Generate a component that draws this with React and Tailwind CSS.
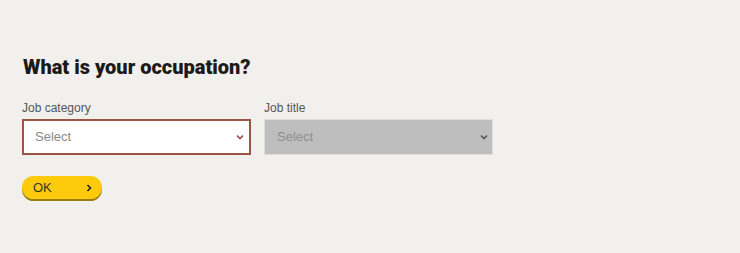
import React from 'react';

const Chevron = ({ className }) => (
  <svg className={className} width="8" height="6" viewBox="0 0 8 6" fill="none">
    <path d="M1 1.5 L4 4.5 L7 1.5" stroke="currentColor" strokeWidth="1.6" />
  </svg>
);

const App = () => {
  return (
    <div className="w-[740px] h-[253px] bg-[#f1f0ec] font-['Liberation_Sans',sans-serif] pt-[56px] pl-[23px]">
      <h1 className="font-['Roboto',sans-serif] font-black text-[20px] leading-[22px] text-[#1c1a18]">
        What is your occupation?
      </h1>

      <div className="flex gap-[13px] mt-[23px] -ml-px">
        <div className="w-[229px]">
          <div className="text-[12px] leading-[14px] text-[#555] mb-[4px]">Job category</div>
          <div className="h-[36px] bg-white border-2 border-[#9c5445] flex items-center justify-between pl-[11px] pr-[5px]">
            <span className="text-[13px] text-[#8a8a8a]">Select</span>
            <Chevron className="text-[#a04848]" />
          </div>
        </div>
        <div className="w-[229px]">
          <div className="text-[12px] leading-[14px] text-[#555] mb-[4px]">Job title</div>
          <div className="h-[36px] bg-[#bebebe] border border-[#dedede] flex items-center justify-between pl-[12px] pr-[4px]">
            <span className="text-[13px] text-[#8e8e8e]">Select</span>
            <Chevron className="text-[#555]" />
          </div>
        </div>
      </div>

      <button className="mt-[21px] -ml-px w-[80px] h-[23px] rounded-full bg-[#fdcb0c] shadow-[0_2px_0_#9a7c10] flex items-center justify-between pl-[11px] pr-[10px]">
        <span className="text-[13px] text-[#3a3320]">OK</span>
        <svg width="6" height="8" viewBox="0 0 6 8" fill="none">
          <path d="M1.5 1 L4.5 4 L1.5 7" stroke="#222" strokeWidth="1.6" />
        </svg>
      </button>
    </div>
  );
};

export default App;
